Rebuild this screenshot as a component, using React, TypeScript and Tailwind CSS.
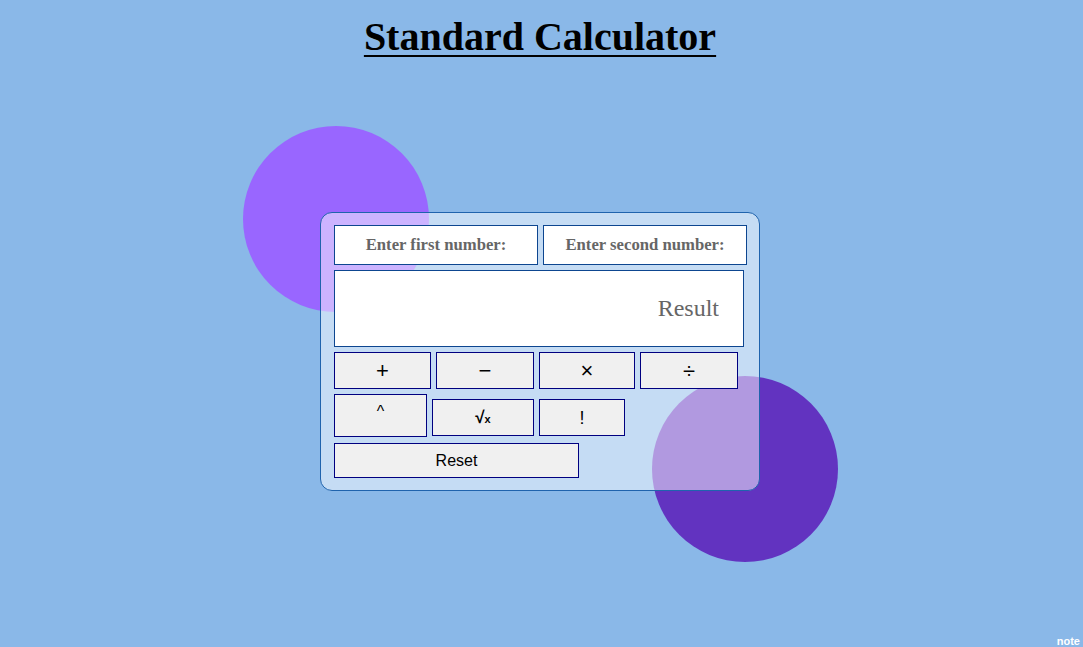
import React from "react";

const serif = { fontFamily: '"Liberation Serif", "Times New Roman", serif' };

const row1 = [
  { label: "+", w: "w-[97px]" },
  { label: "−", w: "w-[98px]" },
  { label: "×", w: "w-[96px]" },
  { label: "÷", w: "w-[98px]" },
];

export default function App() {
  return (
    <main className="relative min-h-screen overflow-hidden bg-[#8ab8e8] pr-[3px] font-['Liberation_Sans',Arial,sans-serif]">
      <h1
        className="pt-[14px] text-center text-[40px] font-bold leading-[46px] text-black underline decoration-[2px] underline-offset-[5px]"
        style={serif}
      >
        Standard Calculator
      </h1>

      <div className="mx-auto mt-[152px] w-[440px]">
        <div className="relative">
          {/* decorative circles */}
          <div className="absolute left-[-77px] top-[-86px] h-[186px] w-[186px] rounded-full bg-[#9966ff]" />
          <div className="absolute left-[332px] top-[164px] h-[186px] w-[186px] rounded-full bg-[#6233c0]" />

          <div className="relative flex h-[279px] flex-col gap-[5px] rounded-[12px] border border-[#1f63ad] bg-white/50 px-[13px] pt-[12px]">
            <div className="flex gap-[5px]" style={serif}>
              <input
                placeholder="Enter first number:"
                className="h-[40px] w-[204px] border border-[#0d4690] bg-white text-center text-[16.7px] font-bold outline-none placeholder:text-[#666666]"
              />
              <input
                placeholder="Enter second number:"
                className="h-[40px] w-[204px] border border-[#0d4690] bg-white text-center text-[16.7px] font-bold outline-none placeholder:text-[#666666]"
              />
            </div>

            <input
              placeholder="Result"
              readOnly
              className="h-[77px] w-[410px] border border-[#0d4690] bg-white pr-[24px] text-right text-[24px] outline-none placeholder:text-[#666666]"
              style={serif}
            />

            <div className="flex gap-[5px]">
              {row1.map((b) => (
                <button
                  key={b.label}
                  className={`flex h-[37px] ${b.w} items-center justify-center border border-[#000080] bg-[#f0f0f0] text-[22px] leading-none text-black`}
                >
                  {b.label}
                </button>
              ))}
            </div>

            <div className="flex items-end gap-[5px]">
              <button className="flex h-[43px] w-[93px] items-start justify-center border border-[#000080] bg-[#f0f0f0] pt-[9px] text-[16px] leading-none text-black">
                ^
              </button>
              <button className="mb-[1px] flex h-[37px] w-[102px] items-center justify-center border border-[#000080] bg-[#f0f0f0] text-[17px] font-bold leading-none text-black">
                √<span className="mt-[4px] text-[11px]">x</span>
              </button>
              <button className="mb-[1px] flex h-[37px] w-[86px] items-center justify-center border border-[#000080] bg-[#f0f0f0] text-[18px] leading-none text-black">
                !
              </button>
            </div>

            <div className="mt-[1px] flex">
              <button className="h-[35px] w-[245px] border border-[#000080] bg-[#f0f0f0] text-[16px] text-black">
                Reset
              </button>
            </div>
          </div>
        </div>
      </div>

      <span className="absolute bottom-[-2px] right-[3px] text-[11px] font-bold text-white">
        note
      </span>
    </main>
  );
}
